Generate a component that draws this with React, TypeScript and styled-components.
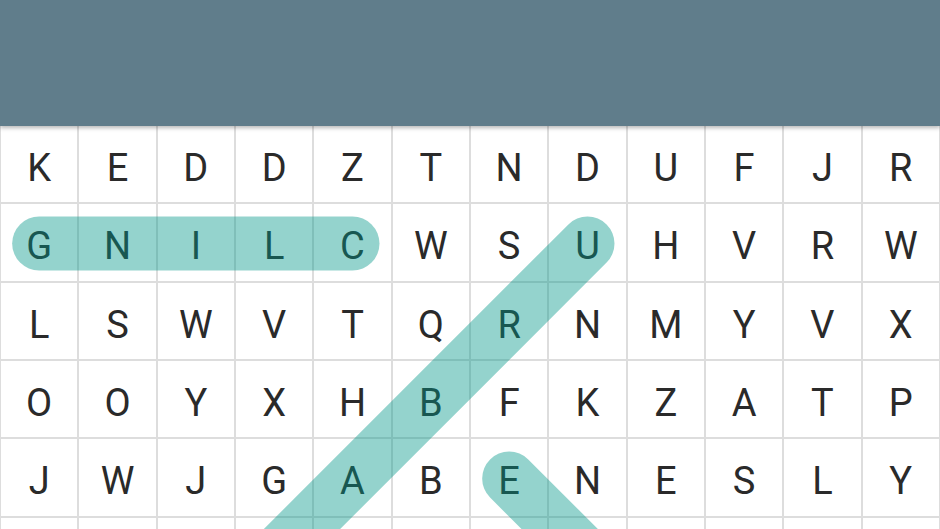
import styled, { createGlobalStyle } from "styled-components";

const COLS = 12;
const CELL = 940 / COLS;

// last row is only a sliver under the fold, its letters sit below the window
const rows = [
  "KEDDZTNDUFJR",
  "GNILCWSUHVRW",
  "LSWVTQRNMYVX",
  "OOYXHBFKZATP",
  "JWJGABENESLY",
  "            ",
];

type Found = { from: [number, number]; to: [number, number] };

// [col, row]
const found: Found[] = [
  { from: [0, 1], to: [4, 1] },
  { from: [7, 1], to: [2, 6] },
  { from: [6, 4], to: [8, 6] },
];

const center = (n: number) => (n + 0.5) * CELL;

const GlobalStyle = createGlobalStyle`
  html, body {
    margin: 0;
    padding: 0;
    background: #ffffff;
    overflow: hidden;
  }
  body {
    font-family: Roboto, "Noto Sans", sans-serif;
  }
`;

const Screen = styled.div`
  display: flex;
  flex-direction: column;
  width: 940px;
  height: 529px;
  overflow: hidden;
`;

const AppBar = styled.header`
  flex: 0 0 126px;
  background-color: #607d8b;
  box-shadow: 0 2px 4px rgba(0, 0, 0, 0.28);
  position: relative;
  z-index: 2;
`;

const Board = styled.div`
  position: relative;
  flex: 0 0 auto;
`;

const LetterGrid = styled.div`
  display: grid;
  grid-template-columns: repeat(${COLS}, ${CELL}px);
  grid-auto-rows: ${CELL}px;
  border-left: 2px solid #dddddd;
  margin-left: -1px;
`;

const Cell = styled.div`
  display: flex;
  align-items: center;
  justify-content: center;
  box-sizing: border-box;
  border-right: 2px solid #dddddd;
  border-bottom: 2px solid #dddddd;
  font-size: 38px;
  font-weight: 400;
  color: #2a2a2a;
  padding-top: 8px;
`;

const Highlights = styled.svg`
  position: absolute;
  left: 0;
  top: 0;
  pointer-events: none;
`;

export default function App() {
  const width = COLS * CELL;
  const height = rows.length * CELL;
  return (
    <>
      <GlobalStyle />
      <Screen>
        <AppBar />
        <Board>
          <LetterGrid>
            {rows.map((row, r) =>
              row.split("").map((ch, c) => (
                <Cell key={`${r}-${c}`}>{ch.trim()}</Cell>
              ))
            )}
          </LetterGrid>
          <Highlights width={width} height={height} viewBox={`0 0 ${width} ${height}`}>
            {found.map((f, i) => (
              <line
                key={i}
                x1={center(f.from[0])}
                y1={center(f.from[1])}
                x2={center(f.to[0])}
                y2={center(f.to[1])}
                stroke="rgba(0, 150, 136, 0.42)"
                strokeWidth={54}
                strokeLinecap="round"
              />
            ))}
          </Highlights>
        </Board>
      </Screen>
    </>
  );
}
